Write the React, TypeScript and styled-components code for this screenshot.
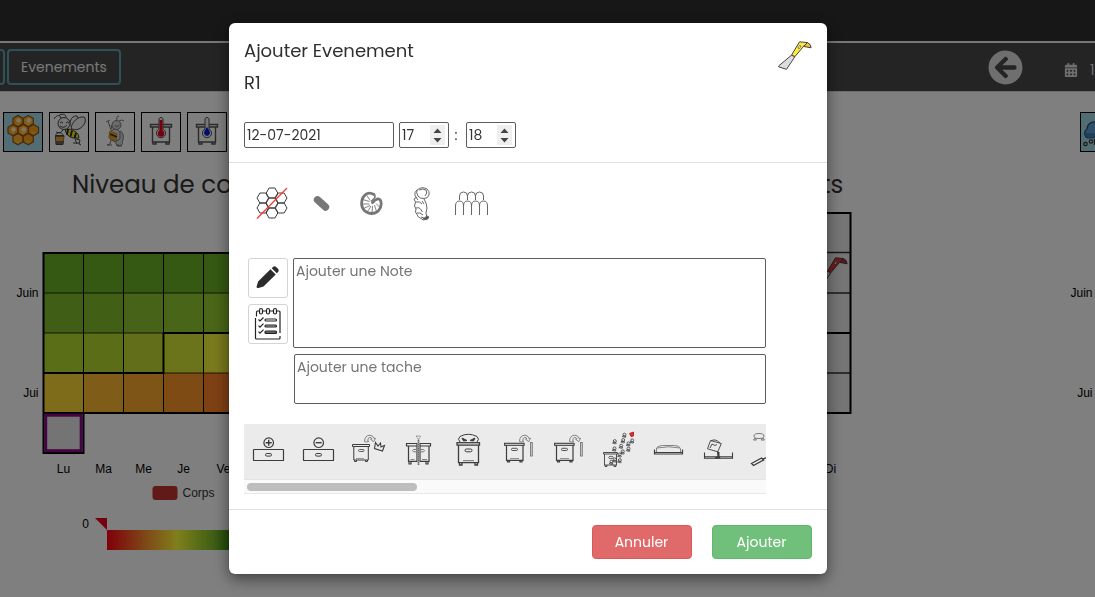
import React from "react";
import styled, { createGlobalStyle } from "styled-components";
import { FaArrowCircleLeft, FaCalendarAlt } from "react-icons/fa";

const GlobalStyle = createGlobalStyle`
  *, *::before, *::after { box-sizing: border-box; }
  html, body { margin: 0; height: 597px; overflow: hidden; background: #fff; }
  body {
    font-family: Poppins, Inter, "Open Sans", sans-serif;
    font-size: 14px;
    color: #333;
  }
`;

/* ---------- page behind the dialog ---------- */

const Page = styled.div`
  display: flex;
  flex-direction: column;
  width: 1095px;
  height: 597px;
  overflow: hidden;
`;

const TopBar = styled.header`
  height: 43px;
  flex: none;
  background: #2e2e2e;
  border-bottom: 2px solid #efefef;
`;

const NavBar = styled.nav`
  display: flex;
  flex: none;
  align-items: center;
  justify-content: space-between;
  height: 49px;
  background: #484848;
  border-bottom: 1px solid #dcdcdc;
`;

const NavGroup = styled.div`
  display: flex;
  align-items: center;
  gap: 2px;
`;

const NavButton = styled.button<{ $width: number; $shift?: number }>`
  width: ${(p) => p.$width}px;
  margin-left: ${(p) => p.$shift ?? 0}px;
  height: 36px;
  flex: none;
  padding: 1px 0 0;
  border: 2px solid #5ea4b2;
  border-radius: 4px;
  background: transparent;
  color: #f0f0f0;
  font: inherit;
`;

const NavRight = styled.div`
  display: flex;
  align-items: center;
  width: 107px;
  color: #dedede;
  svg { flex: none; }
`;

const DateLabel = styled.span`
  display: flex;
  flex: none;
  align-items: center;
  gap: 12px;
  margin-left: 41px;
  padding-top: 6px;
  white-space: nowrap;
`;

const Toolbar = styled.div`
  display: flex;
  flex: none;
  gap: 6px;
  padding: 20px 0 0 3px;
  height: 60px;
`;

const Tile = styled.div<{ $active?: boolean; $push?: boolean }>`
  width: 40px;
  height: 40px;
  flex: none;
  margin-left: ${(p) => (p.$push ? "847px" : 0)};
  border: 1px solid #000;
  background: ${(p) => (p.$active ? "#a5dbe7" : "#fff")};
  svg { display: block; }
`;

const Charts = styled.div`
  display: flex;
  width: 1581px;
`;

const ChartColumn = styled.section`
  width: 527px;
  flex: none;
`;

const ChartTitle = styled.h2<{ $inset: number }>`
  height: 48px;
  margin: 0;
  padding: 14px 0 0 ${(p) => p.$inset}px;
  font-size: 24.5px;
  line-height: 38px;
  font-weight: 400;
  white-space: nowrap;
`;

const ChartSvg = styled.svg`
  display: block;
  font-family: "Liberation Sans", Arial, sans-serif;
  font-size: 12px;
`;

/* ---------- dialog ---------- */

const Backdrop = styled.div`
  position: fixed;
  inset: 0;
  padding: 23px 0 0 229px;
  background: rgba(0, 0, 0, 0.5);
`;

const Dialog = styled.div`
  display: flex;
  flex-direction: column;
  width: 598px;
  height: 551px;
  background: #fff;
  border-radius: 6px;
  box-shadow: 0 5px 15px rgba(0, 0, 0, 0.5), 0 0 1px rgba(0, 0, 0, 0.6);
`;

const DialogHeader = styled.header`
  display: flex;
  justify-content: space-between;
  height: 140px;
  padding: 12px 15px 0;
  border-bottom: 1px solid #e0e0e0;
`;

const Title = styled.div`
  font-size: 18px;
  line-height: 32px;
  color: #2f2f2f;
`;

const DateRow = styled.div`
  display: flex;
  align-items: center;
  margin-top: 23px;
`;

const Field = styled.div<{ $width: number; $gap?: number }>`
  display: flex;
  align-items: center;
  width: ${(p) => p.$width}px;
  height: 26px;
  margin-right: ${(p) => p.$gap ?? 0}px;
  padding: 2px 3px 2px 2px;
  border: 1px solid #5c5c5c;
  border-radius: 2px;
`;

const FieldInput = styled.input`
  flex: 1;
  min-width: 0;
  padding: 0;
  border: 0;
  outline: 0;
  background: transparent;
  color: #333;
  font: inherit;
`;

const Spinner = styled.span`
  width: 15px;
  height: 20px;
  flex: none;
  background: #efefef;
  svg { display: block; }
`;

const Colon = styled.span`
  width: 17px;
  padding-right: 3px;
  text-align: center;
`;

const DialogBody = styled.div`
  display: flex;
  flex-direction: column;
  height: 346px;
  padding: 15px;
`;

const BroodRow = styled.div`
  display: flex;
  height: 50px;
  margin-left: 3px;
`;

const Editor = styled.div`
  display: flex;
  margin-top: 30px;
  padding-left: 4px;
  height: 146px;
`;

const EditorButtons = styled.div`
  display: flex;
  flex-direction: column;
  gap: 6px;
`;

const IconButton = styled.button`
  width: 40px;
  height: 40px;
  padding: 0;
  border: 1px solid #d4d4d4;
  border-radius: 3px;
  background: #fff;
  svg { display: block; }
`;

const EditorFields = styled.div`
  display: flex;
  flex-direction: column;
  align-items: flex-end;
  gap: 6px;
  width: 478px;
`;

const TextBox = styled.textarea<{ $width: number; $height: number }>`
  display: block;
  width: ${(p) => p.$width}px;
  height: ${(p) => p.$height}px;
  padding: 2px;
  border: 1px solid #5c5c5c;
  border-radius: 2px;
  resize: none;
  outline: 0;
  overflow: hidden;
  font: inherit;
  line-height: 20px;
  &::placeholder { color: #757575; opacity: 1; }
`;

const ActionStrip = styled.div`
  width: 522px;
  margin-top: 20px;
  overflow: hidden;
`;

const ActionRow = styled.div`
  display: flex;
  height: 55px;
  background: #ebebeb;
  svg { flex: none; }
`;

const ScrollTrack = styled.div`
  height: 15px;
  padding: 3px;
  background: #fafafa;
  border-top: 1px solid #e4e4e4;
  border-bottom: 1px solid #e8e8e8;
`;

const ScrollThumb = styled.div`
  width: 170px;
  height: 8px;
  border-radius: 4px;
  background: #bebebe;
`;

const DialogFooter = styled.footer`
  display: flex;
  justify-content: flex-end;
  gap: 20px;
  height: 65px;
  padding: 15px;
  border-top: 1px solid #e0e0e0;
`;

const FooterButton = styled.button<{ $bg: string; $edge: string }>`
  width: 100px;
  height: 34px;
  padding: 0 1px 0 0;
  border: 1px solid ${(p) => p.$edge};
  border-radius: 4px;
  background: ${(p) => p.$bg};
  color: #fff;
  font: inherit;
`;

/* ---------- toolbar drawings ---------- */

const Honeycomb = () => {
  const cells = [[14, 8], [24.3, 8], [9, 17], [19.2, 17], [29.5, 17], [14, 26], [24.3, 26]];
  return (
    <svg width="38" height="38">
      {cells.map(([x, y], i) => (
        <g key={i}>
          <path
            d={`M${x - 5} ${y - 2.7}l5-2.800 5 2.800v5.500l-5 2.900-5-2.900z`}
            fill={i % 2 ? "#ffb52a" : "#f7a51c"}
            stroke="#96501a"
            strokeWidth="1.2"
          />
          {i < 4 && <circle cx={x + 0.5} cy={y - 0.5} r="2.300" fill="#ffe9c5" />}
          <path d={`M${x - 2.5} ${y + 3}h4`} stroke="#ffd955" />
        </g>
      ))}
    </svg>
  );
};

const HoneyBee = () => (
  <svg width="38" height="38" fill="none" stroke="#444" strokeWidth="1">
    <path d="M21 15C22 9 28 3 34 4c3 2 1 9-5 12-3 1-6 1-8-1zM20 13c-1-6 3-11 7-10l1 2" fill="#f2f2f2" />
    <path d="M15 16q6-1 11 3 3 2 3 6-5 1-9-1-5-3-5-8z" fill="#f4e425" />
    <path d="M18 16l-1 6M22 17.500l-1.500 6M26 20l-1.500 5" stroke="#222" strokeWidth="1.800" />
    <circle cx="14" cy="10.500" r="6" fill="#f2f2f2" />
    <path d="M11 5.500C11 2 7 1 4 6M16 4.500c0-4-5-4-7-2M10 10q1.500-2 3 0m3 0q1.500-2 3 0M10 13q4 3 7-1" />
    <path d="M14 16l-4 4-4-1M25 26l2 5m-1-5l4 1-1 4 2 1M23 30h6" />
    <path d="M5.500 22q3.500-5 8 0" />
    <path d="M5.500 22.500h8.500l-1 9H6z" fill="#666" />
    <path d="M5.800 24h8l-.4 4H6.200z" fill="#ec9f20" stroke="none" />
  </svg>
);

const StandingBee = () => (
  <svg width="38" height="38" fill="#d6d6d6" stroke="#777" strokeWidth="1">
    <path d="M24 18c4 1 4 8 2 11 2 2-1 4-5 4l-2-6" />
    <path d="M15 18l5-3 4 4v7l-5 3-5-3z" />
    <path d="M14 18l7 3-1 3-7-3zM13 22l8 4-1 2-7-3z" fill="#eaa820" stroke="#cf8f19" />
    <path d="M14 21l7 3" stroke="#333" strokeWidth="1.600" />
    <circle cx="20.500" cy="12" r="4.500" />
    <path d="M21 8q-1-5 2-5M23 8q3-2 5 0M19 12l1.500 2 3-2M15 17l-3-9M10 9l4-2M16 16l-1-4" fill="none" />
    <path d="M15 27l-1 4-3 1h5M22 31v2h4" fill="none" />
  </svg>
);

const HiveGauge = ({ color, drop }: { color: string; drop?: boolean }) => (
  <svg width="38" height="38" fill="none" stroke="#555" strokeWidth="1.400">
    <path d="M8.500 11.500h21v2.500h-21zM10.500 14v15h17V14M11 29v2h3v-2M24 29v2h3v-2" />
    <path d="M17 16V6q2-3.500 4 0v10a4.600 4.600 0 1 1-4 0z" fill="#eee" strokeWidth="1" />
    {drop ? (
      <path d="M19 14l2.500 4a3 3 0 1 1-5 0z" fill={color} stroke="none" />
    ) : (
      <g fill={color} stroke="none">
        <circle cx="19" cy="20.500" r="3.200" />
        <path d="M17.500 7h3v13h-3z" />
      </g>
    )}
  </svg>
);

const RainCloud = () => (
  <svg width="38" height="38" stroke="#2d4a60" strokeWidth="1.200">
    <path d="M7 25a5 5 0 0 1-1-9q1-8 9-7 5-3 10 4 6 3 4 11z" fill="#5b9fd2" />
    <path d="M3.500 20q.5 4.500 4 4.500h21v-4.500z" fill="#3f7fb5" stroke="none" />
    <g fill="none" stroke="#333">
      <circle cx="4.500" cy="31" r="1.700" />
      <circle cx="10" cy="28.500" r="1.700" />
      <path d="M13.500 26v6" />
      <circle cx="18" cy="31" r="1.700" />
    </g>
  </svg>
);

const HiveTool = ({ handle, blade, hook }: { handle: string; blade: string; hook: string }) => (
  <g stroke="#444" strokeWidth="1" strokeLinejoin="round">
    <path d="M13.500 14.200L.600 25l.400 1 7.500 2.300L17 15.500z" fill={blade} />
    <path d="M13.500 14.200L21.500.800 29.500 1.600l-4 3.800L17 15.500z" fill={handle} />
    <path d="M25.500 5.400l4-3.800q3.500 1.500 3.600 5.200z" fill={hook} />
    <ellipse cx="21.500" cy="6" rx=".9" ry="1.700" transform="rotate(35 21.500 6)" fill="#fff" strokeWidth=".7" />
  </g>
);

/* ---------- heat maps ---------- */

const DAYS = ["Lu", "Ma", "Me", "Je", "Ve", "Sa", "Di"];

const HEAT = [
  ["#6ab226", "#6ab226", "#6ab226", "#6ab226", "#6ab226", "#6ab226", "#6ab226"],
  ["#80bc2a", "#84be2c", "#8cc62e", "#92ca2e", "#94cc2e", "#9ccc2e", "#a4cc2e"],
  ["#b4da2e", "#b8da2f", "#c4dc34", "#d6e636", "#f2f23a", "#ffe83a", "#ffdf38"],
  ["#ffd834", "#ffba30", "#ffaa2e", "#ff962a", "#ff8028", "#ff7026", "#ff6024"],
];

const BroodChart = () => (
  <ChartSvg width="527" height="397" viewBox="0 200 527 397">
    {HEAT.map((row, r) =>
      row.map((c, i) => <rect key={`${r}-${i}`} x={43.5 + i * 40} y={253 + r * 40} width="40" height="40" fill={c} />)
    )}
    <path d="M43 293h280M43 333h120M163 373h160" stroke="#000" strokeOpacity=".5" strokeWidth="1.400" />
    <path d="M83.500 253v160M123.500 253v160M163.500 253v160M203.500 253v160M243.500 253v160" stroke="#000" />
    <rect x="43.500" y="413" width="40" height="40" fill="#e6e6e6" />
    <path d="M323 253H43.500V453h40V413M43 413h280M43.500 373h120v-40h160" fill="none" stroke="#000" strokeWidth="2" />
    <rect x="45.700" y="415.200" width="35.500" height="35.500" fill="#e8e8e8" stroke="#860a86" strokeWidth="3" />
    <text x="38.500" y="297" textAnchor="end">Juin</text>
    <text x="38.500" y="397" textAnchor="end">Jui</text>
    {DAYS.map((d, i) => (
      <text key={d} x={63.5 + i * 40} y="473" textAnchor="middle">{d}</text>
    ))}
    <rect x="152.500" y="486" width="25" height="14" rx="3" fill="#c23531" />
    <text x="182.500" y="497" fill="#333">Corps</text>
    <defs>
      <linearGradient id="scale">
        <stop offset="0" stopColor="#ff0014" />
        <stop offset=".25" stopColor="#fd842e" />
        <stop offset=".5" stopColor="#ffff38" />
        <stop offset=".75" stopColor="#84c02c" />
        <stop offset="1" stopColor="#006400" />
      </linearGradient>
    </defs>
    <rect x="107" y="530" width="140" height="20" fill="url(#scale)" />
    <path d="M95 518h12v12z" fill="#f0001c" />
    <text x="89" y="528" textAnchor="end">0</text>
  </ChartSvg>
);

const EventChart = () => (
  <ChartSvg width="527" height="397" viewBox="527 200 527 397">
    <rect x="571" y="213" width="280" height="200" fill="#ebebeb" />
    <path d="M571 252.500h280M571 293h280M571 373h280" stroke="#000" strokeOpacity=".8" strokeWidth="1.400" />
    <path d="M571 213h279.500v200H571M571 333h280" fill="none" stroke="#000" strokeWidth="2" />
    <g transform="translate(814 257)">
      <HiveTool handle="#e0353a" blade="#ddd" hook="#c02a30" />
    </g>
    {DAYS.map((d, i) => (
      <text key={d} x={590.5 + i * 40} y="473" textAnchor="middle">{d}</text>
    ))}
  </ChartSvg>
);

const WeatherChart = () => (
  <ChartSvg width="527" height="397" viewBox="1054 200 527 397">
    <text x="1092.500" y="297" textAnchor="end">Juin</text>
    <text x="1092.500" y="397" textAnchor="end">Jui</text>
  </ChartSvg>
);

/* ---------- brood drawings ---------- */

const BroodIcon = ({ children }: { children: React.ReactNode }) => (
  <svg width="50" height="50" fill="none" stroke="#666" strokeWidth="1">{children}</svg>
);

const NoBrood = () => {
  const cells = [[25, 15], [15.8, 20], [34.2, 20], [25, 25], [15.8, 30], [34.2, 30], [25, 35]];
  return (
    <BroodIcon>
      {cells.map(([x, y]) => (
        <path key={`${x}-${y}`} d={`M${x - 5.8} ${y}l2.900-5h5.800l2.900 5-2.900 5h-5.800z`} stroke="#3c3c3c" />
      ))}
      <path d="M10 40.500L40 10" stroke="#f33" strokeWidth="1.200" />
    </BroodIcon>
  );
};

const Larva = () => (
  <BroodIcon>
    <path d="M27 16.500C20 12.500 14.600 18.500 14.600 25.500c0 6 4.700 10 10 10 5.800 0 9.600-4.500 9.600-9.800 0-3.500-1.700-5.200-3.500-4.800-2 .5-3.700 2-5.200 3.800" stroke="#777" strokeWidth="2.800" strokeLinecap="round" />
    <path d="M27.500 17q1.500 2-.5 3.500l-3 3" stroke="#777" strokeWidth="1.400" />
    <path d="M22.500 23.500l-7-2M22.500 26H15M23 27.500l-6.500 3M24 28l-4 6.500M25.500 28l-.5 7M27.500 27l2 6.500M29 25.500l4 4M23 22.500l-3-5" strokeWidth=".8" />
  </BroodIcon>
);

const Pupa = () => (
  <BroodIcon>
    <path d="M20 12q5-4 10-1 3 2.500 2 6-1 3.500-5 3.500-4 .3-6-2.500-2-3-1-6zM20 12q-3 2-2 6l3 4M22 12q4-2 7 0 2 3-1 6" />
    <path d="M20 19l-3 2 1.500 3-1 4 1.500 3-.5 3 3 5 5 3 4-1 1-2M27 21l2 4 1 5-1 5 1 5" />
    <path d="M19 24q4-1 6 2M18.500 30q4-1 5 1l2 3M20 35q3-1 6 2M25 23l2 3M24 39l3 1" />
    <path d="M26 41l4 .5 2-2.500-2-1z" fill="#555" />
  </BroodIcon>
);

const SealedCells = () => (
  <BroodIcon>
    <path d="M8.500 37V28q0-5 4-5t4 5v9M16.500 28q0-5 4-5t4 5v9M24.500 28q0-5 4-5t4 5v9M32.500 28q0-5 4-5t4 5v9" />
    <path d="M12.500 22v-4q0-4 4-4t4 4v4M20.500 18q0-4 4-4t4 4v4M28.500 18q0-4 4-4t4 4v4" />
  </BroodIcon>
);

/* ---------- hive action drawings, 50 x 55 each ---------- */

const ActionIcon = ({ children }: { children: React.ReactNode }) => (
  <svg width="50" height="55" fill="none" stroke="#3d3d3d" strokeWidth="1">{children}</svg>
);

const Super = ({ plus }: { plus?: boolean }) => (
  <ActionIcon>
    <rect x="9.500" y="25.500" width="30" height="11" rx=".6" strokeWidth="1.200" />
    <rect x="21.500" y="29.500" width="6" height="2.600" rx="1.300" />
    <circle cx="24.700" cy="18.700" r="4.800" strokeWidth="1.200" />
    <path d={plus ? "M21.700 18.700h6M24.700 15.700v6" : "M21.700 18.700h6"} strokeWidth="1.400" />
  </ActionIcon>
);

const Arc = ({ x = 0 }: { x?: number }) => (
  <path
    transform={`translate(${x} 0)`}
    d="M20.500 17.500q.3-6.300 5.500-6.300 3.300.3 4 3.300l1.500-.3-1.800 3.500-3.200-2.500 1.500-.2q-.7-1.600-2.200-1.600-2.300.3-2 3.600l1 .5-2.300.5z"
    stroke="#777"
    strokeWidth=".9"
  />
);

const RemoveQueen = () => (
  <ActionIcon>
    <path d="M8.500 20.500h17v2h-17zM9.800 22.500v13.500h14.500V22.500M10.500 36v1.500h2V36M21.500 36v1.500h2V36" />
    <rect x="14.500" y="25.500" width="5.500" height="2" rx="1" strokeWidth=".8" />
    <path d="M12 34.500h8" strokeWidth=".5" />
    <Arc />
    <path d="M31.500 18.500l2.500 3.500 2.500-3 .5 4 3.500-1.500-2 5.500-8-2.500z" strokeWidth="1.100" />
  </ActionIcon>
);

const SplitHive = () => (
  <ActionIcon>
    <path d="M12.500 19.500H23v2.500H12.500zM26 19.500h10.500v2.500H26zM14.500 22v15.300H23V22M26 22v15.300h9V22M15 38v2h2v-2M32 38v2h2v-2" strokeWidth="1.200" />
    <path d="M22 25.500h-2.500q-2 1.200 0 2.300H22M27 25.500h2.500q2 1.200 0 2.300H27" stroke="#777" />
    <path d="M24.500 16v25" stroke="#999" strokeWidth="2" />
    <path d="M22.500 12l2 4 2-4zM24.500 16v25" stroke="#666" strokeDasharray="1 1" />
    <path d="M16.500 35.500h4M28 35.500h5" strokeWidth=".6" />
  </ActionIcon>
);

const AlarmedHive = () => (
  <ActionIcon>
    <rect x="13" y="18.700" width="22.500" height="2.400" strokeWidth="1.300" />
    <path d="M14.500 21.200v17.500h20V21.200M15.500 39v2h2.500v-2M31 39v2h2.500v-2" strokeWidth="1.300" />
    <rect x="21" y="25" width="7" height="2.800" rx="1.400" />
    <path d="M19 36.700h11" strokeWidth=".7" />
    <path d="M16 18q-3-3 0-5.500 8-4.500 17 0 3 2.500 0 5.500" />
    <path d="M18 14l5 2.500-3.500.5zM31 14l-5 2.500 3.500.5z" fill="#333" />
  </ActionIcon>
);

const FrameHive = () => (
  <ActionIcon>
    <rect x="10.600" y="19.300" width="19.500" height="2" strokeWidth="1.100" />
    <path d="M12.500 21.300v15h16.500v-15M13.500 36.300v1.500h2v-1.500M26 36.300v1.500h2v-1.500" strokeWidth="1.200" />
    <rect x="17.500" y="24.300" width="6" height="2.200" rx="1.100" strokeWidth=".9" />
    <path d="M16 34.500h9" strokeWidth=".5" />
    <Arc x={5} />
    <rect x="36.500" y="18.500" width="1.800" height="13.500" fill="#ccc" stroke="#777" strokeWidth=".9" />
  </ActionIcon>
);

const BEES = [[20.3, 17.7], [20, 25], [30, 11.3], [28.7, 16.7], [26.7, 22.3], [34, 20], [34, 25.3], [37.7, 17], [28.3, 28], [25.3, 31], [25.3, 36.7], [20.3, 36], [17, 38.3]];

const Swarm = () => (
  <ActionIcon>
    <path d="M9.500 28.500h14v1.500h-14zM10.500 30v11h12V30M11 41v1.500h2V41M20 41v1.500h2V41" strokeWidth=".9" />
    <ellipse cx="17" cy="33.500" rx="2.300" ry="1.200" strokeWidth=".8" />
    {BEES.map(([x, y]) => (
      <g key={`${x}-${y}`} strokeWidth=".8">
        <circle cx={x + 0.5} cy={y - 0.6} r="1.500" />
        <path d={`M${x - 1.8} ${y + 1.3}l1.800-1.300 2.100 1.500-1 .6z`} />
      </g>
    ))}
    <path d="M35.500 9.500l4-1.500v4l-2.500.5z" fill="#f02222" stroke="#a33" />
  </ActionIcon>
);

const Fondant = () => (
  <ActionIcon>
    <path d="M10.500 25.500v4.500h28v-4.500M10.500 28.500h28" strokeWidth="1.200" />
    <path d="M12.500 28v-4q2-2.500 6-2.500h12q5 0 6 3v3.500M13 24q12-2.500 23 0" stroke="#777" strokeWidth=".9" />
  </ActionIcon>
);

const Syrup = () => (
  <ActionIcon>
    <path d="M10.500 28.500v5.700h28v-5.700M11 32.800h27" strokeWidth="1.100" />
    <path d="M16.500 16.500l10.800 3-3.500 8.300-10.300-3zM17 17q4-3 9 2M16 24l2-4 3 1.500 2-1" strokeWidth=".9" />
    <path d="M23.500 27.500l.5 5-3 1.500h5l-1-2v-4" fill="#444" />
  </ActionIcon>
);

const Harvest = () => (
  <ActionIcon>
    <path d="M10 12q0-2.500 5-2.500t5 2.500q0 2.500-5 2.500T10 12zM11 14l-1.500 2h3zM19 14l1.500 2h-3.500z" stroke="#777" />
    <path d="M7.500 39.500l10-5.500 2 2-10 5.500zM19 35l4-1.500" strokeWidth="1.400" />
  </ActionIcon>
);

const PencilGlyph = () => (
  <svg width="38" height="38" fill="#2c2c2c">
    <path d="M22.700 9.200l1.600-1.500q1.300-1 2.600.1l2.300 2.300q1.200 1.300.1 2.600l-1.500 1.600zM21.500 10.300l5.200 5.200L14.500 27.600 9.500 29q-2.200.4-1.900-1.600l1.500-4.900z" />
  </svg>
);

const TaskGlyph = () => (
  <svg width="38" height="38" fill="none" stroke="#222" strokeWidth="1.200">
    <path d="M7.500 11.500V7q0-1 1-1H10M13.500 6H17M20.500 6H24M27.500 6h2.500q1 0 1 1v21M31 31v2q0 1-1 1H7.500q-1 0-1-1V13" />
    <rect x="10.500" y="3.500" width="3" height="5.500" rx="1.500" />
    <rect x="17.500" y="3.500" width="3" height="5.500" rx="1.500" />
    <rect x="24.500" y="3.500" width="3" height="5.500" rx="1.500" />
    <path d="M9.500 14.500l1.500 1.500 3.500-3.500M9.500 20.700l1.500 1.500 3.500-3.500M9.500 26.700l1.500 1.500 3.500-3.500" />
    <rect x="16" y="14" width="11.500" height="2" rx="1" />
    <rect x="16" y="20" width="11.500" height="2" rx="1" fill="#aaa" />
    <rect x="16" y="26" width="11.500" height="2.400" rx="1" fill="#777" />
  </svg>
);

const NumberField = ({ value }: { value: string }) => (
  <Field $width={50}>
    <FieldInput defaultValue={value} />
    <Spinner>
      <svg width="15" height="20" fill="#444">
        <path d="M3.500 8l4-4.500 4 4.500zM3.500 13l4 4.500 4-4.500z" />
      </svg>
    </Spinner>
  </Field>
);

export default function App() {
  return (
    <>
      <GlobalStyle />
      <Page>
        <TopBar />
        <NavBar>
          <NavGroup>
            <NavButton $width={100} $shift={-95} />
            <NavButton $width={114}>Evenements</NavButton>
          </NavGroup>
          <NavRight>
            <FaArrowCircleLeft size={35} />
            <DateLabel>
              <FaCalendarAlt size={14} />
              <span>12-07-2021</span>
            </DateLabel>
          </NavRight>
        </NavBar>
        <Toolbar>
          <Tile $active><Honeycomb /></Tile>
          <Tile><HoneyBee /></Tile>
          <Tile><StandingBee /></Tile>
          <Tile><HiveGauge color="#f00018" /></Tile>
          <Tile><HiveGauge color="#0018d8" drop /></Tile>
          <Tile $active $push><RainCloud /></Tile>
        </Toolbar>
        <Charts>
          <ChartColumn>
            <ChartTitle $inset={72}>Niveau de couvain</ChartTitle>
            <BroodChart />
          </ChartColumn>
          <ChartColumn>
            <ChartTitle $inset={166}>Evenements</ChartTitle>
            <EventChart />
          </ChartColumn>
          <ChartColumn>
            <ChartTitle $inset={0} />
            <WeatherChart />
          </ChartColumn>
        </Charts>
      </Page>

      <Backdrop>
        <Dialog role="dialog">
          <DialogHeader>
            <div>
              <Title>Ajouter Evenement</Title>
              <Title>R1</Title>
              <DateRow>
                <Field $width={150} $gap={5}><FieldInput defaultValue="12-07-2021" /></Field>
                <NumberField value="17" />
                <Colon>:</Colon>
                <NumberField value="18" />
              </DateRow>
            </div>
            <svg width="34" height="36" viewBox="0 -6 34 36">
              <HiveTool handle="#ffeb3b" blade="#ddd" hook="#fbc02d" />
            </svg>
          </DialogHeader>

          <DialogBody>
            <BroodRow>
              <NoBrood />
              <BroodIcon>
                <path d="M20.500 21.800l8 7.200" stroke="#777" strokeWidth="7.400" strokeLinecap="round" />
              </BroodIcon>
              <Larva />
              <Pupa />
              <SealedCells />
            </BroodRow>

            <Editor>
              <EditorButtons>
                <IconButton><PencilGlyph /></IconButton>
                <IconButton><TaskGlyph /></IconButton>
              </EditorButtons>
              <EditorFields>
                <TextBox $width={473} $height={90} placeholder="Ajouter une Note" />
                <TextBox $width={472} $height={50} placeholder="Ajouter une tache" />
              </EditorFields>
            </Editor>

            <ActionStrip>
              <ActionRow>
                <Super plus />
                <Super />
                <RemoveQueen />
                <SplitHive />
                <AlarmedHive />
                <FrameHive />
                <FrameHive />
                <Swarm />
                <Fondant />
                <Syrup />
                <Harvest />
              </ActionRow>
              <ScrollTrack><ScrollThumb /></ScrollTrack>
            </ActionStrip>
          </DialogBody>

          <DialogFooter>
            <FooterButton $bg="#e06a6a" $edge="#dc5858">Annuler</FooterButton>
            <FooterButton $bg="#70bf7a" $edge="#5fb76a">Ajouter</FooterButton>
          </DialogFooter>
        </Dialog>
      </Backdrop>
    </>
  );
}
